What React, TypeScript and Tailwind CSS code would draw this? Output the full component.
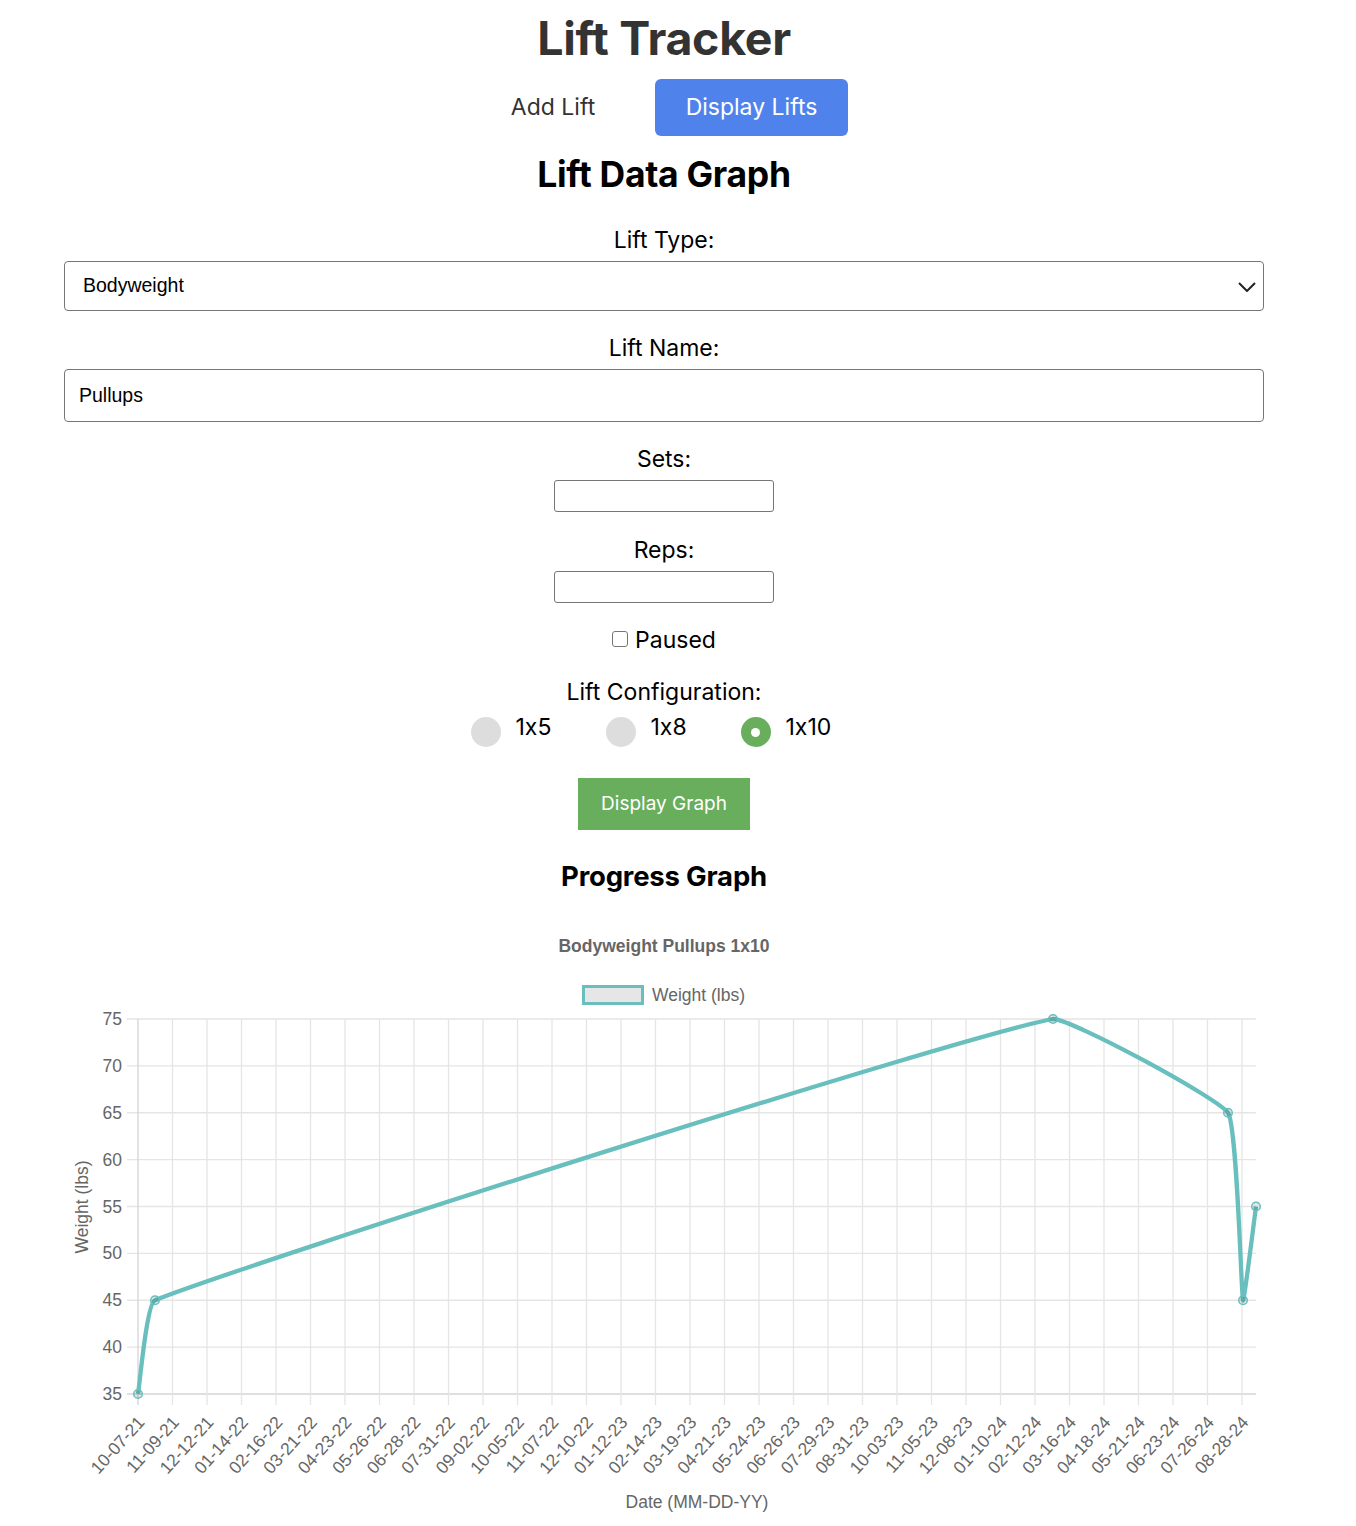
import React from "react";

const TICKS = [
  "10-07-21","11-09-21","12-12-21","01-14-22","02-16-22","03-21-22","04-23-22","05-26-22","06-28-22","07-31-22","09-02-22","10-05-22","11-07-22","12-10-22","01-12-23","02-14-23","03-19-23","04-21-23","05-24-23","06-26-23","07-29-23","08-31-23","10-03-23","11-05-23","12-08-23","01-10-24","02-12-24","03-16-24","04-18-24","05-21-24","06-23-24","07-26-24","08-28-24",
];

const LEFT = 138;
const RIGHT = 1256;
const TOP = 1019;
const BOTTOM = 1394;
const yFor = (v: number) => BOTTOM - (v - 35) * ((BOTTOM - TOP) / 40);

const PTS = [
  { x: 138, y: yFor(35) },
  { x: 155, y: yFor(45) },
  { x: 1053, y: yFor(75) },
  { x: 1228, y: yFor(65) },
  { x: 1243, y: yFor(45) },
  { x: 1256, y: yFor(55) },
];

function splinePath(pts: { x: number; y: number }[], t = 0.1) {
  const cps = pts.map((cur, i) => {
    const prev = pts[i - 1] || cur;
    const next = pts[i + 1] || cur;
    const d01 = Math.hypot(cur.x - prev.x, cur.y - prev.y);
    const d12 = Math.hypot(next.x - cur.x, next.y - cur.y);
    let s01 = d01 / (d01 + d12);
    let s12 = d12 / (d01 + d12);
    if (isNaN(s01)) s01 = 0;
    if (isNaN(s12)) s12 = 0;
    const fa = t * s01;
    const fb = t * s12;
    const clampX = (x: number) => Math.max(LEFT, Math.min(RIGHT, x));
    const clampY = (y: number) => Math.max(TOP, Math.min(BOTTOM, y));
    return {
      px: clampX(cur.x - fa * (next.x - prev.x)),
      py: clampY(cur.y - fa * (next.y - prev.y)),
      nx: clampX(cur.x + fb * (next.x - prev.x)),
      ny: clampY(cur.y + fb * (next.y - prev.y)),
    };
  });
  let d = `M ${pts[0].x} ${pts[0].y}`;
  for (let i = 1; i < pts.length; i++) {
    d += ` C ${cps[i - 1].nx} ${cps[i - 1].ny} ${cps[i].px} ${cps[i].py} ${pts[i].x} ${pts[i].y}`;
  }
  return d;
}

function Chart() {
  const grid = "#e5e5e5";
  const font = "'Liberation Sans', Arial, Helvetica, sans-serif";
  const yVals = [35, 40, 45, 50, 55, 60, 65, 70, 75];
  return (
    <svg width={1200} height={606} viewBox="64 920 1200 606" className="block">
      <text x={664} y={946} textAnchor="middle" dominantBaseline="central" fill="#666" fontFamily={font} fontWeight={700} fontSize={17.5}>
        Bodyweight Pullups 1x10
      </text>
      <rect x={583.5} y={986.5} width={59} height={17} fill="#e6e6e6" stroke="#68bfbe" strokeWidth={3} />
      <text x={652} y={995} dominantBaseline="central" fill="#666" fontFamily={font} fontSize={17.5}>
        Weight (lbs)
      </text>
      {yVals.map((v) => (
        <g key={v}>
          <line x1={127} x2={RIGHT} y1={yFor(v)} y2={yFor(v)} stroke={v === 35 ? "#d4d4d4" : grid} strokeWidth={1.3} />
          <text x={122} y={yFor(v)} textAnchor="end" dominantBaseline="central" fill="#666" fontFamily={font} fontSize={17.5}>
            {v}
          </text>
        </g>
      ))}
      {TICKS.map((t, i) => {
        const x = LEFT + i * 34.5;
        return (
          <g key={t}>
            <line x1={x} x2={x} y1={TOP} y2={BOTTOM + 11} stroke={i === 0 ? "#d4d4d4" : grid} strokeWidth={1.3} />
            <text
              x={x + 3}
              y={1419}
              textAnchor="end"
              dominantBaseline="central"
              fill="#666"
              fontFamily={font}
              fontSize={17.5}
              transform={`rotate(-48 ${x + 3} 1419)`}
            >
              {t}
            </text>
          </g>
        );
      })}
      <text x={697} y={1502} textAnchor="middle" dominantBaseline="central" fill="#666" fontFamily={font} fontSize={17.5}>
        Date (MM-DD-YY)
      </text>
      <text x={82} y={1207} textAnchor="middle" dominantBaseline="central" fill="#666" fontFamily={font} fontSize={17.5} transform="rotate(-90 82 1207)">
        Weight (lbs)
      </text>
      <path d={splinePath(PTS)} fill="none" stroke="#68bfbe" strokeWidth={4.3} strokeLinejoin="round" />
      {PTS.map((p, i) => (
        <circle key={i} cx={p.x} cy={p.y} r={4.3} fill="rgba(0,0,0,0.1)" stroke="#68bfbe" strokeWidth={1.5} />
      ))}
    </svg>
  );
}

function Radio({ label, checked }: { label: string; checked?: boolean }) {
  return (
    <div className="flex w-[135px] items-start">
      <div
        className={
          checked
            ? "mt-[4px] flex h-[30px] w-[30px] items-center justify-center rounded-full bg-[#68ae5d]"
            : "mt-[4px] h-[30px] w-[30px] rounded-full bg-[#dddddd]"
        }
      >
        {checked ? <div className="h-[9px] w-[9px] rounded-full bg-white" /> : null}
      </div>
      <span className="ml-[15px] h-[28px] text-[23px] leading-[28px] text-black">{label}</span>
    </div>
  );
}

export default function App() {
  const body = { fontFamily: "Inter, 'Noto Sans', sans-serif", fontFeatureSettings: "'calt' 0" };
  const ctl = { fontFamily: "'Liberation Sans', Arial, sans-serif" };
  return (
    <div className="min-h-[1526px] w-[1356px] bg-white" style={body}>
      <div className="flex w-[1328px] flex-col items-center">
        <h1 className="mt-[10px] h-[56px] text-[46.5px] font-bold leading-[56px] tracking-[-0.3px] text-[#333]">
          Lift Tracker
        </h1>
        <div className="mt-[13px] flex h-[57px] items-stretch gap-[29px]">
          <button className="w-[146px] rounded-[6px] text-[23px] text-[#333]">Add Lift</button>
          <button className="w-[193px] rounded-[6px] bg-[#4f83eb] text-[23px] text-white">Display Lifts</button>
        </div>
        <h2 className="mt-[19px] h-[40px] text-[35.5px] font-bold leading-[40px] tracking-[-0.3px] text-black">
          Lift Data Graph
        </h2>
        <div className="mt-[31px] h-[28px] text-[23px] leading-[28px] text-black">Lift Type:</div>
        <div
          className="relative mt-[7px] flex h-[50px] w-[1200px] items-center rounded-[4px] border border-[#767676] pl-[18px] text-[19.5px] text-black"
          style={ctl}
        >
          Bodyweight
          <svg className="absolute right-[7px] top-[20px]" width="18" height="10" viewBox="0 0 18 10">
            <polyline points="1,1 9,9 17,1" fill="none" stroke="#222" strokeWidth="2" />
          </svg>
        </div>
        <div className="mt-[23px] h-[28px] text-[23px] leading-[28px] text-black">Lift Name:</div>
        <div
          className="mt-[7px] flex h-[53px] w-[1200px] items-center rounded-[4px] border border-[#767676] pl-[14px] text-[19.5px] text-black"
          style={ctl}
        >
          Pullups
        </div>
        <div className="mt-[23px] h-[28px] text-[23px] leading-[28px] text-black">Sets:</div>
        <div className="mt-[7px] h-[32px] w-[220px] rounded-[3px] border border-[#767676]" />
        <div className="mt-[24px] h-[28px] text-[23px] leading-[28px] text-black">Reps:</div>
        <div className="mt-[7px] h-[32px] w-[220px] rounded-[3px] border border-[#767676]" />
        <div className="mt-[23px] flex h-[28px] items-center">
          <div className="mb-[2px] h-[16px] w-[16px] rounded-[3px] border border-[#767676]" />
          <span className="ml-[7px] text-[23px] leading-[28px] text-black">Paused</span>
        </div>
        <div className="mt-[24px] h-[28px] text-[23px] leading-[28px] text-black">Lift Configuration:</div>
        <div className="mt-[7px] flex h-[34px] pl-[18px]">
          <Radio label="1x5" />
          <Radio label="1x8" />
          <Radio label="1x10" checked />
        </div>
        <button className="mt-[31px] h-[52px] w-[172px] bg-[#68ae5d] text-[19px] text-white">Display Graph</button>
        <h3 className="mt-[28px] h-[36px] text-[27.5px] font-bold leading-[36px] tracking-[-0.2px] text-black">
          Progress Graph
        </h3>
        <div className="mt-[26px]">
          <Chart />
        </div>
      </div>
    </div>
  );
}
